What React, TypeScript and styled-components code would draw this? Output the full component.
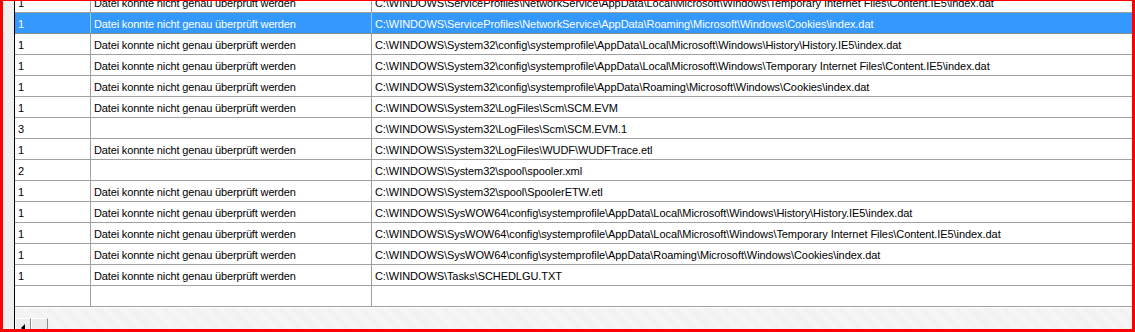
import React from 'react';
import styled, { createGlobalStyle } from 'styled-components';

const GlobalStyle = createGlobalStyle`
	html, body {
		margin: 0;
		padding: 0;
		background: #ffffff;
	}
`;

const Frame = styled.div`
	box-sizing: border-box;
	width: 1135px;
	height: 332px;
	border-style: solid;
	border-color: #ff0000;
	border-width: 1px 3px 3px 3px;
	display: flex;
	overflow: hidden;
	font-family: 'Liberation Sans', Arial, sans-serif;
	font-size: 11px;
	letter-spacing: -0.15px;
	color: #000;
`;

const SideStrip = styled.div`
	width: 11px;
	flex: none;
	background: #f0f0f0;
`;

const Pane = styled.div`
	flex: 1;
	display: flex;
	flex-direction: column;
	border-left: 1px solid #000;
	min-width: 0;
`;

const Viewport = styled.div`
	height: 307px;
	overflow: hidden;
	flex: none;
	background: #fff;
`;

// list scrolled down a few pixels, so the first row is partly hidden
const List = styled.div`
	margin-top: -9px;
`;

const Row = styled.div<{ $selected?: boolean }>`
	display: grid;
	grid-template-columns: 76px 281px 1fr;
	height: 21px;
	box-sizing: border-box;
	border-bottom: 1px solid ${p => (p.$selected ? '#8c8c8c' : '#a0a0a0')};
	background: ${p => (p.$selected ? '#3399ff' : '#fff')};
	color: ${p => (p.$selected ? '#fff' : '#000')};
`;

const Cell = styled.div<{ $selected?: boolean; $last?: boolean }>`
	box-sizing: border-box;
	padding-left: 3px;
	padding-top: 1px;
	line-height: 20px;
	white-space: nowrap;
	overflow: hidden;
	letter-spacing: ${p => (p.$last ? '-0.07px' : 'inherit')};
	border-right: ${p =>
		p.$last ? 'none' : `1px solid ${p.$selected ? '#9ccaff' : '#a0a0a0'}`};
`;

const ScrollBar = styled.div`
	flex: 1;
	display: flex;
	align-items: flex-end;
	background-color: #f6f6f6;
	background-image: repeating-linear-gradient(
		45deg,
		#efefef 0 1px,
		#f8f8f8 1px 2px
	);
`;

const ScrollButton = styled.div<{ $w: number }>`
	width: ${p => p.$w}px;
	height: 11px;
	box-sizing: border-box;
	background: #ececec;
	border-left: 1px solid #fff;
	border-top: 1px solid #fff;
	border-right: 1px solid #8a8a8a;
	display: flex;
	align-items: flex-end;
	justify-content: center;
`;

const Arrow = styled.div`
	width: 0;
	height: 0;
	border-top: 4px solid transparent;
	border-bottom: 4px solid transparent;
	border-right: 4px solid #000;
	margin-bottom: -3px;
`;

type Entry = { count: string; msg: string; path: string };

const MSG = 'Datei konnte nicht genau überprüft werden';

const rows: Entry[] = [
	{
		count: '1',
		msg: MSG,
		path: 'C:\\WINDOWS\\ServiceProfiles\\NetworkService\\AppData\\Local\\Microsoft\\Windows\\Temporary Internet Files\\Content.IE5\\index.dat'
	},
	{
		count: '1',
		msg: MSG,
		path: 'C:\\WINDOWS\\ServiceProfiles\\NetworkService\\AppData\\Roaming\\Microsoft\\Windows\\Cookies\\index.dat'
	},
	{
		count: '1',
		msg: MSG,
		path: 'C:\\WINDOWS\\System32\\config\\systemprofile\\AppData\\Local\\Microsoft\\Windows\\History\\History.IE5\\index.dat'
	},
	{
		count: '1',
		msg: MSG,
		path: 'C:\\WINDOWS\\System32\\config\\systemprofile\\AppData\\Local\\Microsoft\\Windows\\Temporary Internet Files\\Content.IE5\\index.dat'
	},
	{
		count: '1',
		msg: MSG,
		path: 'C:\\WINDOWS\\System32\\config\\systemprofile\\AppData\\Roaming\\Microsoft\\Windows\\Cookies\\index.dat'
	},
	{ count: '1', msg: MSG, path: 'C:\\WINDOWS\\System32\\LogFiles\\Scm\\SCM.EVM' },
	{ count: '3', msg: '', path: 'C:\\WINDOWS\\System32\\LogFiles\\Scm\\SCM.EVM.1' },
	{
		count: '1',
		msg: MSG,
		path: 'C:\\WINDOWS\\System32\\LogFiles\\WUDF\\WUDFTrace.etl'
	},
	{ count: '2', msg: '', path: 'C:\\WINDOWS\\System32\\spool\\spooler.xml' },
	{ count: '1', msg: MSG, path: 'C:\\WINDOWS\\System32\\spool\\SpoolerETW.etl' },
	{
		count: '1',
		msg: MSG,
		path: 'C:\\WINDOWS\\SysWOW64\\config\\systemprofile\\AppData\\Local\\Microsoft\\Windows\\History\\History.IE5\\index.dat'
	},
	{
		count: '1',
		msg: MSG,
		path: 'C:\\WINDOWS\\SysWOW64\\config\\systemprofile\\AppData\\Local\\Microsoft\\Windows\\Temporary Internet Files\\Content.IE5\\index.dat'
	},
	{
		count: '1',
		msg: MSG,
		path: 'C:\\WINDOWS\\SysWOW64\\config\\systemprofile\\AppData\\Roaming\\Microsoft\\Windows\\Cookies\\index.dat'
	},
	{ count: '1', msg: MSG, path: 'C:\\WINDOWS\\Tasks\\SCHEDLGU.TXT' },
	{ count: '', msg: '', path: '' }
];

const SELECTED = 1;

const App: React.FC = () => {
	return (
		<>
			<GlobalStyle />
			<Frame>
				<SideStrip />
				<Pane>
					<Viewport>
						<List>
							{rows.map((r, i) => {
								const sel = i === SELECTED;
								return (
									<Row key={i} $selected={sel}>
										<Cell $selected={sel}>{r.count}</Cell>
										<Cell $selected={sel}>{r.msg}</Cell>
										<Cell $selected={sel} $last>
											{r.path}
										</Cell>
									</Row>
								);
							})}
						</List>
					</Viewport>
					<ScrollBar>
						<ScrollButton $w={16}>
							<Arrow />
						</ScrollButton>
						<ScrollButton $w={17} />
					</ScrollBar>
				</Pane>
			</Frame>
		</>
	);
};

export default App;
